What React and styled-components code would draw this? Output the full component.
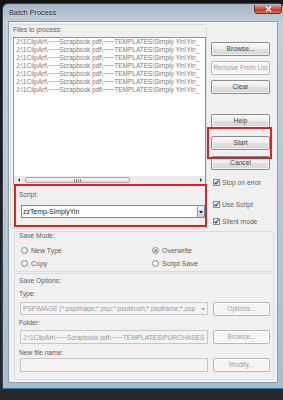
import React from 'react';
import styled, { createGlobalStyle } from 'styled-components';

const GlobalStyle = createGlobalStyle`
  html, body {
    margin: 0;
    padding: 0;
    background: #1c1c1c;
  }
  body {
    font-family: "Liberation Sans", Arial, sans-serif;
  }
`;

const Screen = styled.div`
  width: 283px;
  height: 400px;
  overflow: hidden;
  box-sizing: border-box;
  padding: 3px 0 0 2px;
  background: linear-gradient(to bottom, #141414 0%, #1f1f1f 60%, #262a2e 100%);
`;

const Window = styled.div`
  width: 283px;
  height: 386px;
  box-sizing: border-box;
  display: flex;
  flex-direction: column;
  border: 1px solid #3a4652;
  border-bottom-color: #2e7bb0;
  border-radius: 6px 6px 0 0;
  background: linear-gradient(to bottom, #a3b5c6 0%, #c3d0db 5%, #b7c6d3 55%, #aabccb 100%);
`;

const TitleBar = styled.div`
  height: 17px;
  flex: none;
  display: flex;
  align-items: flex-start;
  justify-content: space-between;
  padding-left: 6px;
`;

const Title = styled.span`
  font-size: 7.3px;
  line-height: 17px;
  color: #1d2935;
  text-shadow: 0 0 3px rgba(255, 255, 255, 0.9);
`;

const CloseButton = styled.div`
  width: 28px;
  height: 9px;
  margin: 1px 2px 0 0;
  box-sizing: border-box;
  display: flex;
  align-items: center;
  justify-content: center;
  border: 1px solid #7a3026;
  border-top: none;
  border-radius: 0 0 4px 4px;
  background: linear-gradient(to bottom, #e79a88 0%, #d25a45 45%, #c13a27 55%, #d86a4c 100%);
`;

const Client = styled.div`
  margin-left: 5px;
  width: 270px;
  height: 362px;
  box-sizing: border-box;
  border: 1px solid #8e9dab;
  background: #f0f0f0;
  padding: 2px 0 0 1px;
`;

const TopArea = styled.div`
  display: grid;
  grid-template-columns: 197px 59px;
  column-gap: 4px;
  height: 205px;
`;

const LeftPanel = styled.div`
  box-sizing: border-box;
  height: 205px;
  border: 1px solid #dcdcdc;
  border-radius: 2px;
  padding: 1px 0 0 1px;
`;

const Label = styled.div`
  font-size: 6.7px;
  line-height: 8px;
  color: #5f5f5f;
  padding-left: ${p => p.$indent || 0}px;
  margin-top: ${p => p.$mt || 0}px;
  white-space: nowrap;
`;

const ListBox = styled.div`
  margin: 3px 0 0 1px;
  width: 193px;
  height: 148px;
  box-sizing: border-box;
  border: 1px solid #8f969d;
  background: #fff;
  display: flex;
  flex-direction: column;
`;

const ListLines = styled.div`
  flex: 1;
  overflow: hidden;
  padding-left: 2px;
`;

const ListLine = styled.div`
  font-size: 6.5px;
  line-height: 8px;
  color: #7a7a7a;
  white-space: nowrap;
`;

const HScroll = styled.div`
  height: 8px;
  flex: none;
  display: flex;
  align-items: center;
  background: #ebebeb;
`;

const ScrollArrow = styled.div`
  width: 9px;
  display: flex;
  align-items: center;
  justify-content: center;
`;

const ScrollThumb = styled.div`
  width: 105px;
  height: 6px;
  margin-left: 2px;
  box-sizing: border-box;
  border: 1px solid #a9a9a9;
  border-radius: 2px;
  background: linear-gradient(to bottom, #f7f7f7, #dcdcdc);
  display: flex;
  align-items: center;
  justify-content: center;
  gap: 1px;
`;

const Grip = styled.span`
  width: 1px;
  height: 3px;
  background: #8a8a8a;
`;

const ScrollFill = styled.div`
  flex: 1;
`;

const ScriptBox = styled.div`
  margin: -1px 0 0 2px;
  width: 193px;
  height: 43px;
  box-sizing: border-box;
  border: 2px solid #e3201b;
  padding: 5px 0 0 3px;
`;

const Combo = styled.div`
  margin: 6px 0 0 2px;
  width: 184px;
  height: 13px;
  box-sizing: border-box;
  display: flex;
  border: 1px solid #5a92c0;
  background: #fff;
`;

const ComboText = styled.div`
  flex: 1;
  font-size: 6.9px;
  line-height: 11px;
  color: #1e1e1e;
  padding-left: 1px;
  white-space: nowrap;
  overflow: hidden;
`;

const DropButton = styled.div`
  width: 6px;
  flex: none;
  border-left: 1px solid #9a9a9a;
  background: linear-gradient(to bottom, #f2f2f2, #d2d2d2);
  display: flex;
  align-items: center;
  justify-content: center;
`;

const RightCol = styled.div`
  position: relative;
  display: flex;
  flex-direction: column;
  padding-top: 18px;
`;

const Button = styled.div`
  flex: none;
  width: ${p => p.$w || 59}px;
  height: 14px;
  margin-top: ${p => p.$mt || 0}px;
  margin-left: ${p => p.$ml || 0}px;
  box-sizing: border-box;
  border: 1px solid ${p => (p.$disabled ? '#b4b8bb' : '#8c8c8c')};
  border-radius: 2px;
  background: ${p =>
    p.$disabled
      ? '#f4f4f4'
      : 'linear-gradient(to bottom, #f6f6f6 0%, #eeeeee 48%, #e0e0e0 52%, #d6d6d6 100%)'};
  box-shadow: inset 0 0 0 1px rgba(255, 255, 255, 0.7);
  font-size: 6.7px;
  line-height: 12px;
  text-align: center;
  color: ${p => (p.$disabled ? '#a2a2a2' : '#444')};
  white-space: nowrap;
`;

const StartMark = styled.div`
  position: absolute;
  left: -4px;
  top: 103px;
  width: 65px;
  height: 32px;
  box-sizing: border-box;
  border: 2px solid #e3201b;
  pointer-events: none;
`;

const CheckRow = styled.div`
  display: flex;
  align-items: center;
  gap: 2px;
  height: 9px;
  margin-top: ${p => p.$mt || 0}px;
  padding-left: 2px;
  font-size: 6.7px;
  color: #5f5f5f;
  white-space: nowrap;
`;

const CheckBox = styled.span`
  width: 7px;
  height: 7px;
  box-sizing: border-box;
  border: 1px solid #8a8c8e;
  background: linear-gradient(135deg, #e8e8e8, #ffffff);
  display: flex;
  align-items: center;
  justify-content: center;
`;

const Group = styled.div`
  margin: ${p => p.$mt || 0}px 0 0 4px;
  width: 260px;
  height: ${p => p.$h}px;
  box-sizing: border-box;
  border: 1px solid #dcdcdc;
  border-radius: 3px;
  padding: ${p => p.$pt || 0}px 0 0 4px;
`;

const RadioGrid = styled.div`
  display: grid;
  grid-template-columns: 131px 1fr;
  grid-auto-rows: 10px;
  row-gap: 3px;
  margin: 5px 0 0 2px;
`;

const RadioRow = styled.div`
  display: flex;
  align-items: center;
  gap: 3px;
  font-size: 7px;
  color: #5f5f5f;
`;

const Radio = styled.span`
  width: 7px;
  height: 7px;
  box-sizing: border-box;
  border-radius: 50%;
  border: 1px solid #8a8c8e;
  background: radial-gradient(circle at 40% 40%, #ffffff, #dedede);
  display: flex;
  align-items: center;
  justify-content: center;
  &::after {
    content: '';
    display: ${p => (p.$on ? 'block' : 'none')};
    width: 3px;
    height: 3px;
    border-radius: 50%;
    background: radial-gradient(circle at 35% 35%, #8fc4f0, #1d5da8);
  }
`;

const FieldRow = styled.div`
  display: flex;
  align-items: flex-start;
  margin-top: ${p => p.$mt || 0}px;
  padding-left: 1px;
`;

const Field = styled.div`
  width: 188px;
  height: ${p => p.$h || 14}px;
  box-sizing: border-box;
  display: flex;
  align-items: center;
  border: 1px solid #c3c7ca;
  background: #f3f3f3;
  padding-left: 2px;
  overflow: hidden;
`;

const FieldText = styled.span`
  flex: 1;
  font-size: 6.6px;
  color: #9a9a9a;
  white-space: nowrap;
  overflow: hidden;
`;

const FieldArrow = styled.span`
  width: 8px;
  flex: none;
  display: flex;
  justify-content: center;
`;

const fileLine = 'J:\\1ClipArt\\~~~Scrapbook pdf\\~~~TEMPLATES\\Simply Yin\\Yin_';

const Tick = () => (
  <svg width="5" height="5" viewBox="0 0 5 5">
    <polyline points="0.5,2.5 2,4 4.5,0.5" fill="none" stroke="#23468a" strokeWidth="1.2" />
  </svg>
);

const Arrow = ({ dir, color = '#333' }) => (
  <svg width="4" height="4" viewBox="0 0 4 4">
    {dir === 'left' && <polygon points="3,0 3,4 1,2" fill={color} />}
    {dir === 'right' && <polygon points="1,0 1,4 3,2" fill={color} />}
    {dir === 'down' && <polygon points="0,1 4,1 2,3.5" fill={color} />}
  </svg>
);

export default function App() {
  return (
    <>
      <GlobalStyle />
      <Screen>
        <Window>
          <TitleBar>
            <Title>Batch Process</Title>
            <CloseButton>
              <svg width="7" height="6" viewBox="0 0 7 6">
                <path d="M1 0.5 L6 5.5 M6 0.5 L1 5.5" stroke="#fff" strokeWidth="1.6" />
              </svg>
            </CloseButton>
          </TitleBar>
          <Client>
            <TopArea>
              <LeftPanel>
                <Label $indent={1}>Files to process:</Label>
                <ListBox>
                  <ListLines>
                    {Array.from({ length: 7 }).map((_, i) => (
                      <ListLine key={i}>{fileLine}</ListLine>
                    ))}
                  </ListLines>
                  <HScroll>
                    <ScrollArrow><Arrow dir="left" /></ScrollArrow>
                    <ScrollThumb>
                      <Grip /><Grip /><Grip /><Grip />
                    </ScrollThumb>
                    <ScrollFill />
                    <ScrollArrow><Arrow dir="right" /></ScrollArrow>
                  </HScroll>
                </ListBox>
                <ScriptBox>
                  <Label>Script:</Label>
                  <Combo>
                    <ComboText>zzTemp-SimplyYin</ComboText>
                    <DropButton><Arrow dir="down" color="#111" /></DropButton>
                  </Combo>
                </ScriptBox>
              </LeftPanel>
              <RightCol>
                <Button>Browse...</Button>
                <Button $mt={5} $disabled>Remove From List</Button>
                <Button $mt={5}>Clear</Button>
                <Button $mt={20}>Help</Button>
                <Button $mt={8}>Start</Button>
                <Button $mt={6}>Cancel</Button>
                <CheckRow $mt={8}><CheckBox><Tick /></CheckBox>Stop on error</CheckRow>
                <CheckRow $mt={13}><CheckBox><Tick /></CheckBox>Use Script</CheckRow>
                <CheckRow $mt={8}><CheckBox><Tick /></CheckBox>Silent mode</CheckRow>
                <StartMark />
              </RightCol>
            </TopArea>
            <Group $mt={2} $h={41}>
              <Label>Save Mode:</Label>
              <RadioGrid>
                <RadioRow><Radio />New Type</RadioRow>
                <RadioRow><Radio $on />Overwrite</RadioRow>
                <RadioRow><Radio />Copy</RadioRow>
                <RadioRow><Radio />Script Save</RadioRow>
              </RadioGrid>
            </Group>
            <Group $mt={1} $h={107} $pt={3}>
              <Label>Save Options:</Label>
              <Label $mt={5}>Type:</Label>
              <FieldRow $mt={4}>
                <Field $h={13}>
                  <FieldText>PSPIMAGE (*.pspimage;*.psp;*.pspbrush;*.pspframe;*.psp</FieldText>
                  <FieldArrow><Arrow dir="down" color="#9a9a9a" /></FieldArrow>
                </Field>
                <Button $w={57} $ml={5} $disabled>Options...</Button>
              </FieldRow>
              <Label $mt={3}>Folder:</Label>
              <FieldRow $mt={3}>
                <Field>
                  <FieldText>J:\1ClipArt\~~~Scrapbook pdf\~~~TEMPLATES\PURCHASES</FieldText>
                </Field>
                <Button $w={57} $ml={5} $disabled>Browse...</Button>
              </FieldRow>
              <Label $mt={5}>New file name:</Label>
              <FieldRow $mt={1}>
                <Field />
                <Button $w={57} $ml={5} $disabled>Modify...</Button>
              </FieldRow>
            </Group>
          </Client>
        </Window>
      </Screen>
    </>
  );
}
